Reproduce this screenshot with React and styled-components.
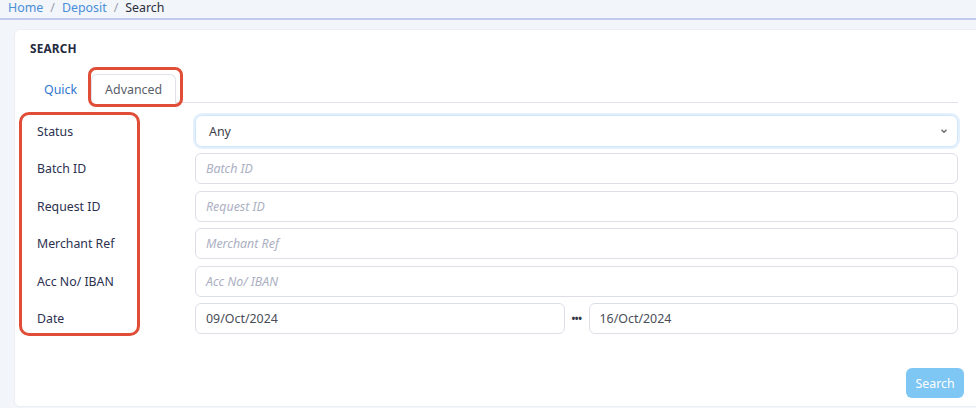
import React from "react";
import styled, { createGlobalStyle } from "styled-components";

const Global = createGlobalStyle`
  html, body { margin: 0; padding: 0; background: #f2f5fa; overflow: hidden; }
  body { font-family: "Noto Sans", "Open Sans", sans-serif; }
  * { box-sizing: border-box; }
`;

const Page = styled.div`
  width: 976px;
  height: 408px;
  position: relative;
  background: #f2f5fa;
`;

const Crumbs = styled.nav`
  height: 20px;
  display: flex;
  align-items: center;
  gap: 7px;
  padding: 0 0 3px 8px;
  font-size: 12.4px;
  border-bottom: 2px solid #c4c9f0;
  color: #9aa0ae;
`;

const Crumb = styled.span`
  color: ${(p) => (p.$active ? "#2c2f3a" : "#4a8ed8")};
`;

const Card = styled.section`
  margin: 9px 0 0 14px;
  width: 970px;
  height: 378px;
  background: #fff;
  border-radius: 6px;
  border: 1px solid #eceef3;
  padding: 10px 25px 0 15px;
  display: flex;
  flex-direction: column;
`;

const Title = styled.h2`
  margin: 0;
  font-size: 11.8px;
  font-weight: 700;
  color: #262a40;
  letter-spacing: 0.2px;
  line-height: 16px;
`;

const Tabs = styled.div`
  margin-top: 18px;
  display: flex;
  border-bottom: 1px solid #dfe2ec;
  height: 29px;
`;

const Tab = styled.div`
  padding: 0 13px;
  height: 29px;
  display: flex;
  align-items: center;
  font-size: 12.4px;
  color: ${(p) => (p.$active ? "#5a5e6a" : "#2f77cf")};
  border: 1px solid ${(p) => (p.$active ? "#dfe2ec" : "transparent")};
  border-bottom: ${(p) => (p.$active ? "1px solid #fff" : "none")};
  border-radius: 6px 6px 0 0;
  background: #fff;
  margin-bottom: -1px;
  ${(p) => p.$active && "height: 30px; padding-top: 1px;"}
`;

const Form = styled.div`
  margin-top: 13px;
  padding-left: 7px;
  display: grid;
  grid-template-columns: 158px 1fr;
  grid-auto-rows: 31px;
  row-gap: 6.4px;
  align-items: center;
`;

const Label = styled.label`
  font-size: 12.3px;
  color: #2c3150;
`;

const Select = styled.div`
  height: 32px;
  margin-top: -1px;
  border: 1px solid #cfe6fb;
  box-shadow: 0 0 0 2px #e3f0fc;
  border-radius: 7px;
  display: flex;
  align-items: center;
  justify-content: space-between;
  padding: 0 8px 0 13px;
  font-size: 12.4px;
  color: #3a3d4a;
`;

const Input = styled.div`
  height: 31px;
  border: 1px solid #dcdfe8;
  border-radius: 6px;
  display: flex;
  align-items: center;
  padding: 0 10px;
  font-size: 12.4px;
  color: ${(p) => (p.$placeholder ? "#acb0c2" : "#4a4d58")};
  font-style: ${(p) => (p.$placeholder ? "italic" : "normal")};
  flex: 1;
`;

const DateRow = styled.div`
  display: flex;
  align-items: center;
  height: 31px;
`;

const Dots = styled.span`
  width: 24px;
  text-align: center;
  font-size: 10px;
  font-weight: 700;
  color: #333846;
  letter-spacing: -0.5px;
`;

const Footer = styled.div`
  margin-top: auto;
  margin-bottom: 8px;
  margin-right: -6px;
  display: flex;
  justify-content: flex-end;
`;

const Button = styled.button`
  width: 58px;
  height: 30px;
  border: none;
  border-radius: 6px;
  background: #7ec6f3;
  color: #fff;
  font-family: inherit;
  font-size: 12.4px;
`;

const Highlight = styled.div`
  position: absolute;
  border: 3px solid #e04e38;
  border-radius: ${(p) => p.$r}px;
  pointer-events: none;
`;

const fields = ["Batch ID", "Request ID", "Merchant Ref", "Acc No/ IBAN"];

export default function App() {
  return (
    <Page>
      <Global />
      <Crumbs>
        <Crumb>Home</Crumb>/<Crumb>Deposit</Crumb>/<Crumb $active>Search</Crumb>
      </Crumbs>
      <Card>
        <Title>SEARCH</Title>
        <Tabs>
          <Tab>Quick</Tab>
          <Tab $active>Advanced</Tab>
        </Tabs>
        <Form>
          <Label>Status</Label>
          <Select>
            <span>Any</span>
            <svg width="10" height="10" viewBox="0 0 10 10">
              <path d="M2.5 3.8 L5 6.3 L7.5 3.8" fill="none" stroke="#666" strokeWidth="1.3" />
            </svg>
          </Select>
          {fields.map((f) => (
            <React.Fragment key={f}>
              <Label>{f}</Label>
              <Input $placeholder>{f}</Input>
            </React.Fragment>
          ))}
          <Label>Date</Label>
          <DateRow>
            <Input>09/Oct/2024</Input>
            <Dots>•••</Dots>
            <Input>16/Oct/2024</Input>
          </DateRow>
        </Form>
        <Footer>
          <Button>Search</Button>
        </Footer>
      </Card>
      <Highlight $r={8} style={{ left: 88, top: 67, width: 95, height: 40 }} />
      <Highlight $r={10} style={{ left: 19, top: 112, width: 121, height: 224 }} />
    </Page>
  );
}
